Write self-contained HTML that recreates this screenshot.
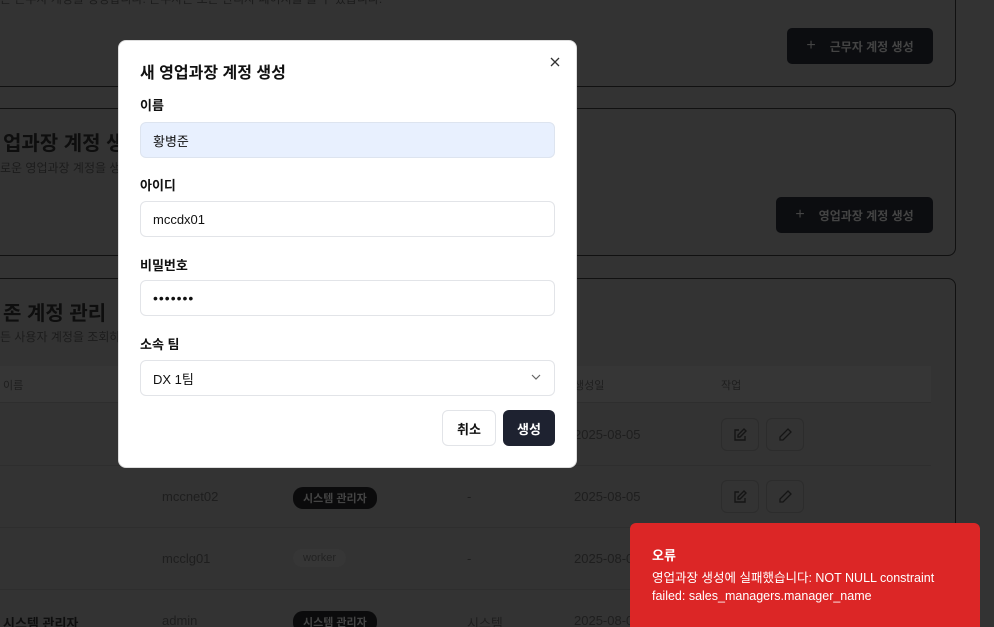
<!DOCTYPE html>
<html><head><meta charset="utf-8"><style>
*{box-sizing:border-box;margin:0;padding:0}
html,body{width:994px;height:627px;overflow:hidden}
body{background:#333;font-family:"Liberation Sans","Noto Sans CJK KR",sans-serif;position:relative;color:#111}
.abs{position:absolute}
.card{position:absolute;left:-20px;width:976px;border:1px solid #111;border-radius:8px}
.dbtn{position:absolute;background:#0c0d10;color:#444;font-size:12px;font-weight:bold;border-radius:5px;display:flex;align-items:center;justify-content:center;gap:14px}
.cell{position:absolute;font-size:13px;color:#1e1e1e}
.badge{position:absolute;background:#0b0b0c;color:#444;font-size:11px;font-weight:bold;border-radius:10px;padding:3px 10px}
.ib{position:absolute;width:38px;height:33px;border:1px solid #2c2c2c;border-radius:6px;display:flex;align-items:center;justify-content:center}
.modal{position:absolute;left:118px;top:40px;width:459px;height:428px;background:#fff;border-radius:8px;border:1px solid #ddd}
.lbl{position:absolute;left:21px;font-size:13px;font-weight:bold;color:#111}
.inp{position:absolute;left:21px;width:415px;height:36px;border:1px solid #e2e4e8;border-radius:6px;font-size:13px;padding-left:12px;display:flex;align-items:center;color:#111}
.toast{position:absolute;left:630px;top:523px;width:350px;height:104px;background:#dc2626;border-radius:6px 6px 0 0;color:#fff;padding:22px 22px}
</style></head><body>
<div class="abs" style="left:0;top:-10px;font-size:12px;color:#1c1c1c">존 근무자 계정을 생성합니다. 근무자는 모든 관리자 페이지를 볼 수 있습니다.</div>
<div class="card" style="top:-20px;height:107px"></div>
<div class="dbtn" style="left:787px;top:28px;width:146px;height:36px"><span style="font-size:16px;font-weight:normal">+</span>근무자 계정 생성</div>
<div class="card" style="top:108px;height:148px"></div>
<div class="abs" style="left:3px;top:127px;font-size:20px;font-weight:bold;color:#0e0e0e">업과장 계정 생성</div>
<div class="abs" style="left:0;top:159px;font-size:12px;color:#1c1c1c">로운 영업과장 계정을 생성합니다.</div>
<div class="dbtn" style="left:776px;top:197px;width:157px;height:36px"><span style="font-size:16px;font-weight:normal">+</span>영업과장 계정 생성</div>
<div class="card" style="top:278px;height:360px"></div>
<div class="abs" style="left:3px;top:297px;font-size:20px;font-weight:bold;color:#0e0e0e">존 계정 관리</div>
<div class="abs" style="left:0;top:328px;font-size:12px;color:#1c1c1c">든 사용자 계정을 조회하고 관리합니다.</div>
<div class="abs" style="left:0;top:366px;width:931px;height:37px;background:#363636;border-bottom:1px solid #2e2e2e"></div>
<div class="cell" style="left:3px;top:377px;font-size:11px">이름</div>
<div class="cell" style="left:574px;top:377px;font-size:11px">생성일</div>
<div class="cell" style="left:721px;top:377px;font-size:11px">작업</div>
<div class="abs" style="left:0;top:465px;width:931px;height:1px;background:#2e2e2e"></div>
<div class="abs" style="left:0;top:527px;width:931px;height:1px;background:#2e2e2e"></div>
<div class="abs" style="left:0;top:589px;width:931px;height:1px;background:#2e2e2e"></div>
<div class="cell" style="left:574px;top:427px">2025-08-05</div>
<div class="ib" style="left:721px;top:418px"><svg width="14" height="14" viewBox="0 0 14 14"><path d="M6 2H2v10h10V8M11 1l2 2-6 6H5V7z" fill="none" stroke="#151515" stroke-width="1.4"/></svg></div>
<div class="ib" style="left:766px;top:418px"><svg width="14" height="14" viewBox="0 0 14 14"><path d="M10 1l3 3-8 8H2V9z" fill="none" stroke="#151515" stroke-width="1.3"/></svg></div>
<div class="cell" style="left:162px;top:489px">mccnet02</div>
<div class="badge" style="left:293px;top:487px">시스템 관리자</div>
<div class="cell" style="left:467px;top:489px">-</div>
<div class="cell" style="left:574px;top:489px">2025-08-05</div>
<div class="ib" style="left:721px;top:480px"><svg width="14" height="14" viewBox="0 0 14 14"><path d="M6 2H2v10h10V8M11 1l2 2-6 6H5V7z" fill="none" stroke="#151515" stroke-width="1.4"/></svg></div>
<div class="ib" style="left:766px;top:480px"><svg width="14" height="14" viewBox="0 0 14 14"><path d="M10 1l3 3-8 8H2V9z" fill="none" stroke="#151515" stroke-width="1.3"/></svg></div>
<div class="cell" style="left:162px;top:551px">mcclg01</div>
<div class="badge" style="left:293px;top:549px;background:#363636;color:#222;font-weight:normal">worker</div>
<div class="cell" style="left:467px;top:551px">-</div>
<div class="cell" style="left:574px;top:551px">2025-08-05</div>
<div class="cell" style="left:3px;top:613px;font-weight:bold;color:#0e0e0e">시스템 관리자</div>
<div class="cell" style="left:162px;top:613px">admin</div>
<div class="badge" style="left:293px;top:611px">시스템 관리자</div>
<div class="cell" style="left:467px;top:613px">시스템</div>
<div class="cell" style="left:574px;top:613px">2025-08-05</div>

<div class="modal">
<div class="abs" style="left:21px;top:18px;font-size:16px;font-weight:bold">새 영업과장 계정 생성</div>
<svg class="abs" style="left:431px;top:16px" width="10" height="10" viewBox="0 0 10 10"><path d="M1 1L9 9M9 1L1 9" stroke="#333" stroke-width="1.3"/></svg>
<div class="lbl" style="top:54px">이름</div>
<div class="inp" style="top:81px;background:#e8f0fe;border-color:#dde4ef">황병준</div>
<div class="lbl" style="top:134px">아이디</div>
<div class="inp" style="top:160px">mccdx01</div>
<div class="lbl" style="top:214px">비밀번호</div>
<div class="inp" style="top:239px;font-size:14px;letter-spacing:1px">•••••••</div>
<div class="lbl" style="top:293px">소속 팀</div>
<div class="inp" style="top:319px">DX 1팀<svg class="abs" style="left:390px;top:13px" width="10" height="7" viewBox="0 0 10 7"><path d="M1 1L5 5L9 1" fill="none" stroke="#666" stroke-width="1.2"/></svg></div>
<div class="abs" style="left:323px;top:369px;width:54px;height:36px;border:1px solid #e2e4e8;border-radius:6px;font-size:13px;font-weight:bold;display:flex;align-items:center;justify-content:center">취소</div>
<div class="abs" style="left:384px;top:369px;width:52px;height:36px;background:#1e2230;color:#fff;border-radius:6px;font-size:13px;font-weight:bold;display:flex;align-items:center;justify-content:center">생성</div>
</div>

<div class="toast">
<div style="font-size:13px;font-weight:bold;margin-bottom:5px">오류</div>
<div style="font-size:12.5px;line-height:18px">영업과장 생성에 실패했습니다: NOT NULL constraint failed: sales_managers.manager_name</div>
</div>
</body></html>
